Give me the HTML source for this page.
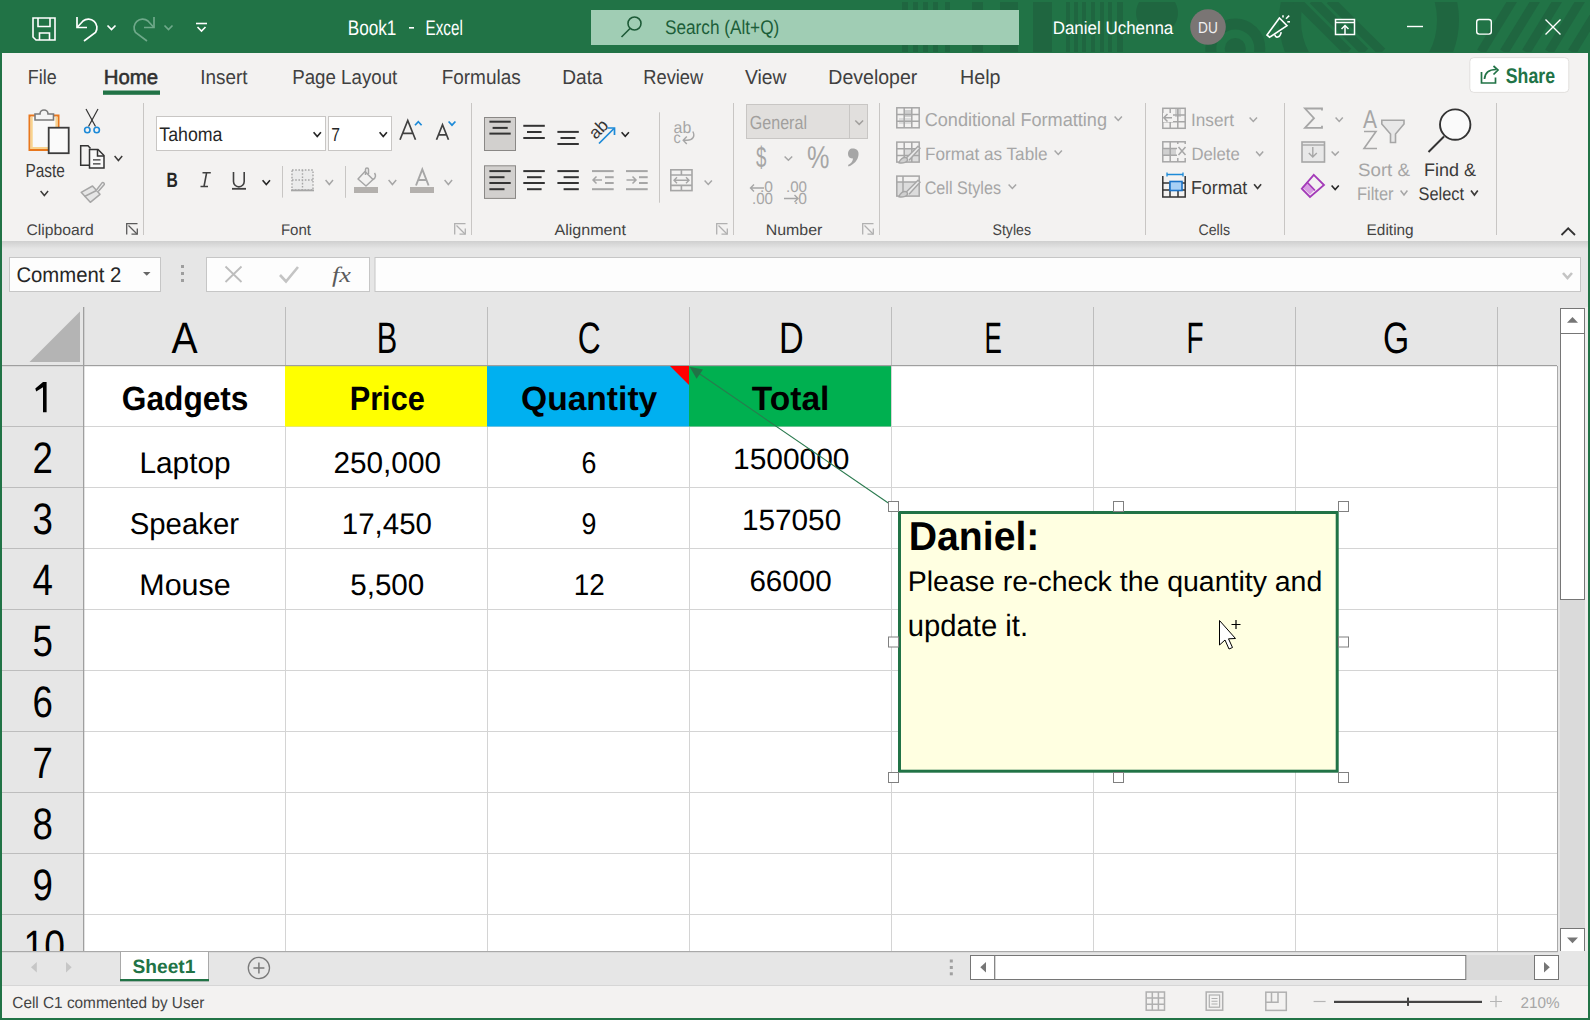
<!DOCTYPE html>
<html><head><meta charset="utf-8"><title>Excel</title>
<style>html,body{margin:0;padding:0;background:#f3f2f1;overflow:hidden}svg{display:block}text{font-family:"Liberation Sans",sans-serif;white-space:pre}</style>
</head><body>
<svg width="1590" height="1020" viewBox="0 0 1590 1020" text-rendering="geometricPrecision">
<rect x="0" y="0" width="1590" height="1020" fill="#f3f2f1"/>
<rect x="0" y="0" width="1590" height="52" fill="#217346"/>
<defs><clipPath id="tb"><rect x="0" y="2" width="1590" height="50"/></clipPath></defs><g clip-path="url(#tb)">
<g fill="#1f6640"><rect x="902" y="0" width="6" height="52"/><rect x="913" y="0" width="5" height="52"/><rect x="923" y="0" width="5" height="52"/><rect x="933" y="0" width="5" height="52"/><rect x="945" y="0" width="5" height="52"/><rect x="972" y="0" width="11" height="52"/><rect x="1000" y="0" width="18" height="52"/><rect x="1033" y="0" width="19" height="52"/><rect x="1066" y="0" width="4" height="52"/><rect x="1074" y="0" width="4" height="52"/><rect x="1082" y="0" width="4" height="52"/><rect x="1091" y="0" width="4" height="52"/><rect x="1100" y="0" width="4" height="52"/><rect x="1108" y="0" width="4" height="52"/><rect x="1117" y="0" width="6" height="52"/><circle cx="1157" cy="13" r="21"/><circle cx="1235.3" cy="48.5" r="10.5"/></g>
<g fill="none" stroke="#1f6640"><circle cx="1235.3" cy="48.5" r="24.5" stroke-width="11"/><circle cx="1369" cy="20" r="79" stroke-width="22"/></g>
<g stroke="#1f6640" stroke-width="9"><line x1="1296" y1="0" x2="1348" y2="52"/><line x1="1313" y1="0" x2="1365" y2="52"/><line x1="1330" y1="0" x2="1382" y2="52"/><line x1="1513" y1="0" x2="1481" y2="52" stroke-width="9"/><line x1="1536" y1="0" x2="1504" y2="52" stroke-width="9"/><line x1="1558" y1="0" x2="1526" y2="52" stroke-width="9"/><line x1="1581" y1="0" x2="1549" y2="52" stroke-width="9"/><line x1="1604" y1="0" x2="1572" y2="52" stroke-width="9"/></g>
</g>
<rect x="0" y="52" width="1590" height="1" fill="#217346"/>
<g fill="none" stroke="#ffffff" stroke-width="1.6"><path d="M33,18 H55 V40 H36 L33,37 Z"/><path d="M38,18 V26.5 H50 V18"/><path d="M39.5,40 V33 H49.5 V40"/></g>
<g fill="none" stroke="#ffffff" stroke-width="1.7" stroke-linejoin="miter"><path d="M77,17 V27.5 H87"/><path d="M77.5,27 L83,21 A8.6,8.6 0 0 1 95.5,32.5 L84,41"/><path d="M107.5,25.5 L111.5,29.5 L115.5,25.5"/></g>
<g fill="none" stroke="#6fa98a" stroke-width="1.7"><path d="M154,17 V27.5 H144"/><path d="M153.5,27 L148,21 A8.6,8.6 0 0 0 135.5,32.5 L147,41"/><path d="M164.5,25.5 L168.5,29.5 L172.5,25.5"/></g>
<g fill="none" stroke="#ffffff" stroke-width="1.6"><path d="M196,23.5 H207"/><path d="M197.5,27 L201.5,31 L205.5,27"/></g>
<text x="347.70" y="34.60" font-size="21.08" font-weight="normal" fill="#ffffff" textLength="48.71" lengthAdjust="spacingAndGlyphs">Book1</text>
<rect x="409" y="27" width="5" height="1.6" fill="#fff"/>
<text x="425.60" y="34.60" font-size="21.08" font-weight="normal" fill="#ffffff" textLength="37.20" lengthAdjust="spacingAndGlyphs">Excel</text>
<rect x="591" y="10" width="428" height="35" fill="#a0cdb4"/>
<g fill="none" stroke="#1d5a37" stroke-width="1.6"><circle cx="634.5" cy="23.5" r="6.5"/><path d="M630,28.5 L621.5,37"/></g>
<text x="665.00" y="34.30" font-size="19.77" font-weight="normal" fill="#1c5e39" textLength="114.30" lengthAdjust="spacingAndGlyphs">Search (Alt+Q)</text>
<text x="1052.70" y="33.50" font-size="18.02" font-weight="normal" fill="#ffffff" textLength="120.58" lengthAdjust="spacingAndGlyphs">Daniel Uchenna</text>
<circle cx="1208" cy="27" r="17.8" fill="#7a7574"/>
<text x="1198.00" y="33.00" font-size="15.99" font-weight="normal" fill="#f0f0f0" textLength="19.80" lengthAdjust="spacingAndGlyphs">DU</text>
<g fill="none" stroke="#ffffff" stroke-width="1.6" stroke-linejoin="miter"><path d="M1267,35 L1279.4,18 L1287,25.6 L1269.6,37.2 Z"/><path d="M1274.8,34.6 C1275.5,38 1280,38.5 1281.2,32.2"/><path d="M1283,15.2 V17.4"/><path d="M1286,18.8 L1289.2,15.6"/><path d="M1287.3,21.8 H1290"/></g>
<g fill="none" stroke="#ffffff" stroke-width="1.5"><rect x="1335.5" y="19.5" width="19" height="15"/><path d="M1335.5,22.5 H1354.5"/><path d="M1345,34 V26"/><path d="M1341.5,29 L1345,25.5 L1348.5,29"/></g>
<g fill="none" stroke="#ffffff" stroke-width="1.4"><path d="M1407,26.5 H1423"/><rect x="1476.7" y="19.5" width="14.6" height="14.6" rx="2.5"/><path d="M1545.5,19.5 L1560.5,34.5 M1560.5,19.5 L1545.5,34.5"/></g>
<rect x="0" y="52" width="2" height="968" fill="#217346"/><rect x="1588" y="52" width="2" height="968" fill="#217346"/>
<text x="27.80" y="84.00" font-size="20.35" font-weight="normal" fill="#404040" textLength="28.81" lengthAdjust="spacingAndGlyphs">File</text>
<text x="200.30" y="84.00" font-size="20.35" font-weight="normal" fill="#404040" textLength="47.20" lengthAdjust="spacingAndGlyphs">Insert</text>
<text x="292.20" y="84.00" font-size="20.35" font-weight="normal" fill="#404040" textLength="105.10" lengthAdjust="spacingAndGlyphs">Page Layout</text>
<text x="441.70" y="84.00" font-size="20.35" font-weight="normal" fill="#404040" textLength="78.99" lengthAdjust="spacingAndGlyphs">Formulas</text>
<text x="562.30" y="84.00" font-size="20.35" font-weight="normal" fill="#404040" textLength="40.39" lengthAdjust="spacingAndGlyphs">Data</text>
<text x="643.30" y="84.00" font-size="20.35" font-weight="normal" fill="#404040" textLength="59.94" lengthAdjust="spacingAndGlyphs">Review</text>
<text x="745.00" y="84.00" font-size="20.35" font-weight="normal" fill="#404040" textLength="41.45" lengthAdjust="spacingAndGlyphs">View</text>
<text x="828.30" y="84.00" font-size="20.35" font-weight="normal" fill="#404040" textLength="89.00" lengthAdjust="spacingAndGlyphs">Developer</text>
<text x="960.00" y="84.00" font-size="20.35" font-weight="normal" fill="#404040" textLength="40.49" lengthAdjust="spacingAndGlyphs">Help</text>
<text x="103.80" y="84.00" font-size="20.35" font-weight="normal" fill="#303030" textLength="54.39" lengthAdjust="spacingAndGlyphs" stroke="#303030" stroke-width="0.55">Home</text>
<rect x="103" y="90.5" width="57" height="4.3" fill="#217346"/>
<rect x="1469.8" y="57.6" width="99" height="34.8" rx="4" fill="#ffffff" stroke="#e1dfdd" stroke-width="1"/>
<g fill="none" stroke="#217346" stroke-width="1.7"><path d="M1481.5,72 V83 H1495.5 V77.5"/><path d="M1484.5,79 C1485,72 1490,69.5 1496,69.5"/><path d="M1493.5,66 L1498,70 L1493.5,74.5"/></g>
<text x="1505.80" y="83.00" font-size="21.22" font-weight="bold" fill="#217346" textLength="49.21" lengthAdjust="spacingAndGlyphs">Share</text>
<rect x="143.0" y="103" width="1" height="132" fill="#c8c6c4"/>
<rect x="471.0" y="103" width="1" height="132" fill="#c8c6c4"/>
<rect x="733.0" y="103" width="1" height="132" fill="#c8c6c4"/>
<rect x="879.0" y="103" width="1" height="132" fill="#c8c6c4"/>
<rect x="1145.0" y="103" width="1" height="132" fill="#c8c6c4"/>
<rect x="1284.0" y="103" width="1" height="132" fill="#c8c6c4"/>
<rect x="1496.0" y="103" width="1" height="132" fill="#c8c6c4"/>
<text x="26.50" y="234.80" font-size="15.41" font-weight="normal" fill="#444444" textLength="67.20" lengthAdjust="spacingAndGlyphs">Clipboard</text>
<text x="280.90" y="234.80" font-size="15.41" font-weight="normal" fill="#444444" textLength="30.10" lengthAdjust="spacingAndGlyphs">Font</text>
<text x="554.40" y="234.80" font-size="15.41" font-weight="normal" fill="#444444" textLength="71.60" lengthAdjust="spacingAndGlyphs">Alignment</text>
<text x="765.70" y="234.80" font-size="15.41" font-weight="normal" fill="#444444" textLength="56.69" lengthAdjust="spacingAndGlyphs">Number</text>
<text x="992.50" y="234.80" font-size="15.41" font-weight="normal" fill="#444444" textLength="38.50" lengthAdjust="spacingAndGlyphs">Styles</text>
<text x="1198.50" y="234.80" font-size="15.41" font-weight="normal" fill="#444444" textLength="31.50" lengthAdjust="spacingAndGlyphs">Cells</text>
<text x="1366.60" y="234.80" font-size="15.41" font-weight="normal" fill="#444444" textLength="47.09" lengthAdjust="spacingAndGlyphs">Editing</text>
<g fill="none" stroke="#5a5a5a" stroke-width="1.3"><path d="M126.7,234.5 V223.7 H137.5"/><path d="M128.5,225.5 L137,234"/><path d="M131.5,234.2 H137.3 V228.5"/></g>
<g fill="none" stroke="#b0b0b0" stroke-width="1.3"><path d="M454.7,234.5 V223.7 H465.5"/><path d="M456.5,225.5 L465,234"/><path d="M459.5,234.2 H465.3 V228.5"/></g>
<g fill="none" stroke="#b0b0b0" stroke-width="1.3"><path d="M716.7,234.5 V223.7 H727.5"/><path d="M718.5,225.5 L727,234"/><path d="M721.5,234.2 H727.3 V228.5"/></g>
<g fill="none" stroke="#b0b0b0" stroke-width="1.3"><path d="M862.7,234.5 V223.7 H873.5"/><path d="M864.5,225.5 L873,234"/><path d="M867.5,234.2 H873.3 V228.5"/></g>
<rect x="29.5" y="115.5" width="29" height="34.5" fill="#f9f9f9" stroke="#e8771d" stroke-width="2"/>
<path d="M31.6,117 V148 H48 M56.5,117 V127" fill="none" stroke="#f8d38e" stroke-width="2.2"/>
<path d="M35,120 V114 H40 A4,4 0 0 1 48,114 H53.5 V120 Z" fill="#f4f4f4" stroke="#7a7a7a" stroke-width="1.6"/>
<rect x="48.7" y="127.7" width="20" height="25.5" fill="#fafafa" stroke="#3c3c3c" stroke-width="1.8"/>
<text x="25.40" y="176.90" font-size="19.04" font-weight="normal" fill="#3b3a39" textLength="39.50" lengthAdjust="spacingAndGlyphs">Paste</text>
<path d="M40.6,191.1 L44.35,195.5 L48.1,191.1" fill="none" stroke="#3b3a39" stroke-width="1.5"/>
<g fill="none" stroke="#333" stroke-width="1.2"><path d="M86,109 L95.5,126.5"/><path d="M98,109 L88.5,126.5"/></g>
<g fill="none" stroke="#1c8ad8" stroke-width="1.6"><circle cx="87.3" cy="130" r="2.7"/><circle cx="96.7" cy="130" r="2.7"/></g>
<g fill="none" stroke="#333" stroke-width="1.5"><path d="M89,165.3 H80.7 V145.8 H88 L90.5,148.5"/><path d="M89.5,149.5 H98 L104,155.5 V168 H89.5 Z" fill="#f8f8f8"/><path d="M97.5,149.5 V156 H104"/><path d="M93,159.8 H100.5 M93,163.8 H100.5" stroke-width="1.2"/></g>
<path d="M114.6,156.1 L118.4,160.5 L122.2,156.1" fill="none" stroke="#3b3a39" stroke-width="1.5"/>
<g stroke="#a6a6a6" stroke-width="1.5" fill="#e6e6e6" stroke-linejoin="round"><path d="M81.2,192.3 L92.5,186 L100,194.3 L90.3,202.3 Z"/><path d="M84.5,196.5 L96.5,190.5" fill="none"/><path d="M96.5,190 L102.2,182.6 A1.6,1.6 0 0 1 104.3,184.6 L98.2,191.5" fill="#eeeeee"/></g>
<rect x="156.5" y="116.5" width="169" height="34" fill="#fff" stroke="#c8c6c4"/>
<rect x="328.5" y="116.5" width="63" height="34" fill="#fff" stroke="#c8c6c4"/>
<text x="159.30" y="141.00" font-size="19.62" font-weight="normal" fill="#262626" textLength="63.09" lengthAdjust="spacingAndGlyphs">Tahoma</text>
<text x="331.30" y="141.00" font-size="18.90" font-weight="normal" fill="#262626" textLength="8.70" lengthAdjust="spacingAndGlyphs">7</text>
<path d="M313.6,132.3 L317.25,136.5 L320.9,132.3" fill="none" stroke="#262626" stroke-width="1.7"/>
<path d="M379.6,132.3 L383.25,136.5 L386.9,132.3" fill="none" stroke="#262626" stroke-width="1.7"/>
<g fill="none" stroke="#404040" stroke-width="1.7"><path d="M400,139.8 L407.75,120.5 L415.5,139.8 M402.6,133.3 H413"/><path d="M436.5,139.8 L442.5,124.8 L448.5,139.8 M438.5,134.8 H446.5"/></g>
<g fill="none" stroke="#1c8ad8" stroke-width="1.7"><path d="M415,125.3 L418.3,121.7 L421.6,125.3"/><path d="M448.6,121.5 L452,125.2 L455.4,121.5"/></g>
<text x="166.60" y="186.80" font-size="20.78" font-weight="bold" fill="#262626" textLength="11.30" lengthAdjust="spacingAndGlyphs">B</text>
<g fill="none" stroke="#404040" stroke-width="1.6"><path d="M206.6,172.8 L204,186.5 M202.5,172.8 H210.8 M200.5,186.5 H208"/><path d="M233.5,172 V181.5 A5.3,5.3 0 0 0 244.2,181.5 V172" /><path d="M232,188.8 H246" stroke-width="1.8"/></g>
<path d="M262.6,180.3 L266.3,184.5 L270.0,180.3" fill="none" stroke="#262626" stroke-width="1.6"/>
<rect x="282" y="166" width="1" height="31.6" fill="#c8c6c4"/><rect x="345" y="166" width="1" height="31.8" fill="#c8c6c4"/>
<rect x="292" y="170" width="21" height="20" fill="#ebebeb"/>
<g fill="none" stroke="#a6a6a6" stroke-width="1.4" stroke-dasharray="1.6,1.6"><rect x="292" y="170" width="21" height="20"/><path d="M302.5,170 V190 M292,180 H313"/></g>
<rect x="291" y="189.5" width="23" height="1.8" fill="#a6a6a6"/>
<path d="M325.6,180.1 L329.3,184.5 L333.0,180.1" fill="none" stroke="#a6a6a6" stroke-width="1.5"/>
<g fill="none" stroke="#a6a6a6" stroke-width="1.5" stroke-linejoin="round"><path d="M358,179 L365,171.5 L373,179.5 L366,186 Z"/><path d="M365.5,175 V169.5 A1.5,1.5 0 0 1 368.5,169.5 V174"/><path d="M373,179.5 C376,178 376,175 374.5,173"/></g>
<rect x="354" y="187" width="24" height="6" fill="#b3b0ad"/>
<path d="M388.6,180.1 L392.4,184.5 L396.2,180.1" fill="none" stroke="#a6a6a6" stroke-width="1.5"/>
<path d="M416,185.5 L422.3,169.3 L428.6,185.5 M418.2,180 H426.4" fill="none" stroke="#a6a6a6" stroke-width="1.9"/>
<rect x="410" y="187" width="24" height="6" fill="#b3b0ad"/>
<path d="M444.6,180.1 L448.35,184.5 L452.09999999999997,180.1" fill="none" stroke="#a6a6a6" stroke-width="1.5"/>
<rect x="484.5" y="117.5" width="31" height="33" fill="#d2d0ce" stroke="#8a8886"/>
<rect x="484.5" y="165.8" width="31" height="32.6" fill="#d2d0ce" stroke="#8a8886"/>
<rect x="489.4" y="120.7" width="21.30000000000001" height="2" fill="#333"/>
<rect x="492.6" y="126.9" width="15.099999999999966" height="2" fill="#333"/>
<rect x="489.4" y="132.6" width="21.30000000000001" height="2" fill="#333"/>
<rect x="523.3" y="124.8" width="21.5" height="2" fill="#333"/>
<rect x="527" y="131.0" width="14.600000000000023" height="2" fill="#333"/>
<rect x="523.3" y="137.0" width="21.5" height="2" fill="#333"/>
<rect x="557.4" y="130.9" width="21.399999999999977" height="2" fill="#333"/>
<rect x="560.5" y="137.0" width="15.0" height="2" fill="#333"/>
<rect x="557.4" y="143.0" width="21.399999999999977" height="2" fill="#333"/>
<rect x="489.4" y="170.1" width="21.30000000000001" height="2" fill="#333"/>
<rect x="489.4" y="176.2" width="15.100000000000023" height="2" fill="#333"/>
<rect x="489.4" y="182.0" width="21.30000000000001" height="2" fill="#333"/>
<rect x="489.4" y="188.2" width="15.100000000000023" height="2" fill="#333"/>
<rect x="523.3" y="170.1" width="21.5" height="2" fill="#333"/>
<rect x="527" y="176.2" width="14.600000000000023" height="2" fill="#333"/>
<rect x="523.3" y="182.0" width="21.5" height="2" fill="#333"/>
<rect x="527" y="188.2" width="14.600000000000023" height="2" fill="#333"/>
<rect x="557.4" y="170.1" width="21.399999999999977" height="2" fill="#333"/>
<rect x="563.6" y="176.2" width="15.199999999999932" height="2" fill="#333"/>
<rect x="557.4" y="182.0" width="21.399999999999977" height="2" fill="#333"/>
<rect x="563.6" y="188.2" width="15.199999999999932" height="2" fill="#333"/>
<rect x="592" y="170.1" width="21.700000000000045" height="2" fill="#a6a6a6"/>
<rect x="605" y="176.2" width="8.700000000000045" height="2" fill="#a6a6a6"/>
<rect x="605" y="182.0" width="8.700000000000045" height="2" fill="#a6a6a6"/>
<rect x="592" y="188.2" width="21.700000000000045" height="2" fill="#a6a6a6"/>
<rect x="626" y="170.1" width="21.700000000000045" height="2" fill="#a6a6a6"/>
<rect x="639" y="176.2" width="8.700000000000045" height="2" fill="#a6a6a6"/>
<rect x="639" y="182.0" width="8.700000000000045" height="2" fill="#a6a6a6"/>
<rect x="626" y="188.2" width="21.700000000000045" height="2" fill="#a6a6a6"/>
<g fill="none" stroke="#a6a6a6" stroke-width="1.5"><path d="M602,180 H593 M596.5,176.5 L593,180 L596.5,183.5"/><path d="M626.5,180 H636 M632.5,176.5 L636,180 L632.5,183.5"/></g>
<g transform="translate(598.5,128.8) rotate(-45)"><text x="-10" y="6" font-size="17.5" fill="#333">ab</text></g>
<g fill="none" stroke="#1c8ad8" stroke-width="1.7"><path d="M599,143.5 L614,128.5"/><path d="M607.5,128 H614.5 V135"/></g>
<path d="M621.6,132.3 L625.25,136.3 L628.9,132.3" fill="none" stroke="#262626" stroke-width="1.6"/>
<rect x="659" y="112.3" width="1" height="90.4" fill="#c8c6c4"/>
<text x="673.60" y="132.60" font-size="16.42" font-weight="normal" fill="#a6a6a6" textLength="17.70" lengthAdjust="spacingAndGlyphs">ab</text>
<text x="673.60" y="143.20" font-size="15.84" font-weight="normal" fill="#a6a6a6" textLength="7.20" lengthAdjust="spacingAndGlyphs">c</text>
<g fill="none" stroke="#a6a6a6" stroke-width="1.4"><path d="M692.8,131.5 C695.5,136.5 692.5,140.2 687,140.2 H683.5 M686.8,136.5 L683.2,140.2 L686.8,144"/></g>
<g fill="none" stroke="#a6a6a6" stroke-width="1.6"><rect x="670.8" y="169.8" width="21.2" height="20.8"/><path d="M670.8,175 H692 M670.8,185.4 H692 M681.4,169.8 V175 M681.4,185.4 V190.6"/><path d="M674,180.2 H689 M677,177.2 L674,180.2 L677,183.2 M686,177.2 L689,180.2 L686,183.2" stroke-width="1.4"/></g>
<path d="M704.6,180.5 L708.25,184.5 L711.9,180.5" fill="none" stroke="#a6a6a6" stroke-width="1.5"/>
<rect x="746.5" y="104.5" width="121" height="34" fill="#e1dfdd" stroke="#c8c6c4"/>
<rect x="849" y="105" width="1" height="33" fill="#c8c6c4"/>
<text x="749.80" y="129.00" font-size="18.90" font-weight="normal" fill="#a19f9d" textLength="57.19" lengthAdjust="spacingAndGlyphs">General</text>
<path d="M855.3000000000001,120.5 L859.2,124.4 L863.1,120.5" fill="none" stroke="#a19f9d" stroke-width="1.5"/>
<text x="756.00" y="166.50" font-size="29.07" font-weight="normal" fill="#a6a6a6" textLength="10.40" lengthAdjust="spacingAndGlyphs">$</text>
<path d="M784.6,156.5 L788.4,160.2 L792.1999999999999,156.5" fill="none" stroke="#a6a6a6" stroke-width="1.5"/>
<text x="807.00" y="168.00" font-size="31.54" font-weight="normal" fill="#a6a6a6" textLength="22.40" lengthAdjust="spacingAndGlyphs">%</text>
<path d="M852.5,148.5 C857,148.5 859,151 858.5,155 C858,160 854,164.5 848.5,166.5 L848,165 C851,163.5 853,161 853,158.5 C850,158.5 848,157 848,154 C848,150.5 850,148.5 852.5,148.5 Z" fill="#a6a6a6"/>
<text x="760.00" y="192.00" font-size="15.26" font-weight="normal" fill="#a6a6a6" textLength="13.00" lengthAdjust="spacingAndGlyphs">.0</text>
<text x="752.00" y="204.00" font-size="15.99" font-weight="normal" fill="#a6a6a6" textLength="21.00" lengthAdjust="spacingAndGlyphs">.00</text>
<g fill="none" stroke="#a6a6a6" stroke-width="1.4"><path d="M750.5,188 H764 M754,184.5 L750.5,188 L754,191.5"/><path d="M784,198.5 H798 M794.5,195 L798,198.5 L794.5,202"/></g>
<text x="786.00" y="192.00" font-size="15.26" font-weight="normal" fill="#a6a6a6" textLength="21.00" lengthAdjust="spacingAndGlyphs">.00</text>
<text x="794.00" y="204.00" font-size="15.99" font-weight="normal" fill="#a6a6a6" textLength="13.00" lengthAdjust="spacingAndGlyphs">.0</text>
<rect x="904" y="110" width="8" height="7" fill="#cfcfcf"/><rect x="899" y="118" width="13" height="6" fill="#dcdcdc"/>
<g fill="none" stroke="#a6a6a6" stroke-width="1.5"><rect x="896.8" y="107.8" width="22.4" height="20"/><path d="M896.8,114.5 H919.2 M896.8,121.2 H919.2 M904.2,107.8 V127.8 M911.8,107.8 V127.8"/></g>
<rect x="904" y="149" width="15" height="13" fill="#dcdcdc"/>
<g fill="none" stroke="#a6a6a6" stroke-width="1.5"><rect x="896.8" y="142.10000000000002" width="22.4" height="20"/><path d="M896.8,148.8 H919.2 M896.8,155.5 H919.2 M904.2,142.10000000000002 V162.10000000000002 M911.8,142.10000000000002 V162.10000000000002"/></g>
<rect x="897" y="182" width="22" height="14" fill="#dcdcdc"/>
<g fill="none" stroke="#a6a6a6" stroke-width="1.5"><rect x="896.8" y="176.1" width="22.4" height="20"/><path d="M896.8,182 H919.2 M903,176.1 V196.1"/></g>
<g stroke="#a6a6a6" stroke-width="1.4" fill="#e8e8e8"><path d="M906,158.3 L918,146.3 L920,148.3 L909,160.3"/><path d="M899,162.8 C900,159.3 903,156.8 906.5,157.8 C908,159.3 908,161.3 905,162.3 C903,163.10000000000002 900.5,163.10000000000002 899,162.8 Z" fill="#d0d0d0"/></g>
<g stroke="#a6a6a6" stroke-width="1.4" fill="#e8e8e8"><path d="M906,192.3 L918,180.3 L920,182.3 L909,194.3"/><path d="M899,196.8 C900,193.3 903,190.8 906.5,191.8 C908,193.3 908,195.3 905,196.3 C903,197.10000000000002 900.5,197.10000000000002 899,196.8 Z" fill="#d0d0d0"/></g>
<text x="924.70" y="126.20" font-size="18.75" font-weight="normal" fill="#a6a6a6" textLength="182.29" lengthAdjust="spacingAndGlyphs">Conditional Formatting</text>
<path d="M1114.6,116.5 L1118.25,120.5 L1121.9,116.5" fill="none" stroke="#a6a6a6" stroke-width="1.5"/>
<text x="925.00" y="159.50" font-size="17.88" font-weight="normal" fill="#a6a6a6" textLength="122.51" lengthAdjust="spacingAndGlyphs">Format as Table</text>
<path d="M1054.6,150.5 L1058.25,154.5 L1061.9,150.5" fill="none" stroke="#a6a6a6" stroke-width="1.5"/>
<text x="924.70" y="193.70" font-size="18.17" font-weight="normal" fill="#a6a6a6" textLength="76.29" lengthAdjust="spacingAndGlyphs">Cell Styles</text>
<path d="M1008.6,184.5 L1012.35,188.5 L1016.1,184.5" fill="none" stroke="#a6a6a6" stroke-width="1.5"/>
<rect x="1175" y="109" width="6" height="8" fill="#d0d0d0"/>
<g fill="none" stroke="#a6a6a6" stroke-width="1.5"><rect x="1162.8" y="108.3" width="22.4" height="20"/><path d="M1162.8,115.0 H1185.2 M1162.8,121.7 H1185.2 M1170.2,108.3 V128.3 M1177.8,108.3 V128.3"/></g>
<rect x="1163" y="113" width="10" height="9" fill="#f3f2f1"/><path d="M1172,117.8 H1164 M1167.5,114 L1163.8,117.8 L1167.5,121.6" fill="none" stroke="#a6a6a6" stroke-width="1.5"/>
<rect x="1164" y="148" width="12" height="7" fill="#d0d0d0"/>
<g fill="none" stroke="#a6a6a6" stroke-width="1.5"><rect x="1162.8" y="141.8" width="22.4" height="20"/><path d="M1162.8,148.5 H1185.2 M1162.8,155.2 H1185.2 M1170.2,141.8 V161.8 M1177.8,141.8 V161.8"/></g>
<rect x="1177" y="144" width="10" height="14" fill="#f3f2f1"/><path d="M1178.5,147 L1185.5,155 M1185.5,147 L1178.5,155" fill="none" stroke="#a6a6a6" stroke-width="1.5"/>
<rect x="1170.5" y="181.5" width="11" height="8.5" fill="#8cbfee"/>
<g fill="none" stroke="#333" stroke-width="1.5"><path d="M1162.8,176 V197 H1185.2 V176 M1162.8,183 H1185.2 M1162.8,190 H1185.2 M1170,183 V197 M1178,183 V197"/></g>
<rect x="1170" y="181.5" width="12" height="9" fill="#a8d0f5" stroke="#1c74c8" stroke-width="1.6"/>
<path d="M1167,174.5 H1183 M1167,172.5 V176.5 M1183,172.5 V176.5" fill="none" stroke="#1c8ad8" stroke-width="1.3"/>
<text x="1191.00" y="125.80" font-size="17.88" font-weight="normal" fill="#a6a6a6" textLength="43.00" lengthAdjust="spacingAndGlyphs">Insert</text>
<path d="M1249.6,117.5 L1253.3,121.5 L1257.0,117.5" fill="none" stroke="#a6a6a6" stroke-width="1.5"/>
<text x="1191.40" y="159.80" font-size="17.88" font-weight="normal" fill="#a6a6a6" textLength="48.29" lengthAdjust="spacingAndGlyphs">Delete</text>
<path d="M1256.1,151.5 L1259.65,155.5 L1263.2,151.5" fill="none" stroke="#a6a6a6" stroke-width="1.5"/>
<text x="1191.00" y="194.00" font-size="18.90" font-weight="normal" fill="#3b3a39" textLength="56.30" lengthAdjust="spacingAndGlyphs">Format</text>
<path d="M1254.1,184.2 L1257.6,188.5 L1261.1000000000001,184.2" fill="none" stroke="#3b3a39" stroke-width="1.7"/>
<path d="M1322,110.5 V108.5 H1305 L1314,118.2 L1305,127.8 H1322 V125.8" fill="none" stroke="#a6a6a6" stroke-width="1.8"/>
<path d="M1335.6,117.5 L1339.2,121.5 L1342.8000000000002,117.5" fill="none" stroke="#a6a6a6" stroke-width="1.5"/>
<rect x="1302" y="142" width="22.5" height="20" fill="#e8e8e8" stroke="#a6a6a6" stroke-width="1.6"/><path d="M1302,145 H1324.5" stroke="#a6a6a6" stroke-width="1.4"/>
<path d="M1312.8,147 V157 M1308.8,153 L1312.8,157 L1316.8,153" fill="none" stroke="#a6a6a6" stroke-width="1.4"/>
<path d="M1331.6,151.5 L1335.2,155.1 L1338.8000000000002,151.5" fill="none" stroke="#a6a6a6" stroke-width="1.5"/>
<path d="M1302,187 L1310,194.5 L1315,189.5 L1307,182 Z" fill="#d89ce3"/><path d="M1313.8,174.8 L1324,185 L1310,197 L1301.8,188.6 Z" fill="none" stroke="#a33ab8" stroke-width="1.8" stroke-linejoin="miter"/><path d="M1307,182 L1315,190.5" stroke="#a33ab8" stroke-width="1.6"/>
<path d="M1331.6,185.5 L1335.2,189.5 L1338.8000000000002,185.5" fill="none" stroke="#262626" stroke-width="1.6"/>
<text x="1363.00" y="128.30" font-size="25.87" font-weight="normal" fill="#a6a6a6" textLength="14.00" lengthAdjust="spacingAndGlyphs">A</text>
<path d="M1364,131.5 H1376 L1364,148.5 H1377" fill="none" stroke="#a6a6a6" stroke-width="1.6"/>
<path d="M1381.8,120.2 H1404 V124 L1395.5,134 V142.5 H1390.5 V134 L1381.8,124 Z" fill="#e8e8e8" stroke="#a6a6a6" stroke-width="1.6"/>
<text x="1358.00" y="175.80" font-size="18.02" font-weight="normal" fill="#a6a6a6" textLength="52.00" lengthAdjust="spacingAndGlyphs">Sort &amp;</text>
<text x="1357.00" y="199.60" font-size="18.31" font-weight="normal" fill="#a6a6a6" textLength="36.60" lengthAdjust="spacingAndGlyphs">Filter</text>
<path d="M1400.6,190.5 L1404.0,195.0 L1407.4,190.5" fill="none" stroke="#a6a6a6" stroke-width="1.5"/>
<circle cx="1455.2" cy="124.6" r="15.2" fill="#fafafa" stroke="#333" stroke-width="1.9"/><path d="M1428.5,152 L1444,136.5" stroke="#333" stroke-width="1.9"/>
<text x="1424.00" y="175.80" font-size="18.02" font-weight="normal" fill="#3b3a39" textLength="52.00" lengthAdjust="spacingAndGlyphs">Find &amp;</text>
<text x="1418.50" y="199.60" font-size="18.31" font-weight="normal" fill="#3b3a39" textLength="45.51" lengthAdjust="spacingAndGlyphs">Select</text>
<path d="M1471.0,190.5 L1474.4,195.0 L1477.8000000000002,190.5" fill="none" stroke="#3b3a39" stroke-width="1.7"/>
<path d="M1561.5,235 L1568.2,228.3 L1575,235" fill="none" stroke="#333" stroke-width="1.8"/>
<defs><linearGradient id="sh" x1="0" y1="0" x2="0" y2="1"><stop offset="0" stop-color="#cfcfcf"/><stop offset="1" stop-color="#e6e6e6"/></linearGradient></defs>
<rect x="2" y="241" width="1586" height="710" fill="#e6e6e6"/>
<rect x="2" y="241" width="1586" height="8" fill="url(#sh)"/>
<rect x="9.5" y="257.5" width="151" height="34" fill="#fdfdfd" stroke="#c6c6c6"/>
<text x="16.40" y="282.30" font-size="21.22" font-weight="normal" fill="#262626" textLength="104.91" lengthAdjust="spacingAndGlyphs">Comment 2</text>
<path d="M143,272 H150.5 L146.75,275.8 Z" fill="#666"/>
<g fill="#9e9e9e"><rect x="181" y="265" width="3" height="3"/><rect x="181" y="272" width="3" height="3"/><rect x="181" y="279" width="3" height="3"/></g>
<rect x="206.5" y="257.5" width="163" height="34" fill="#fdfdfd" stroke="#c6c6c6"/>
<path d="M225.5,266.5 L241.5,282 M241.5,266.5 L225.5,282" stroke="#bdbdbd" stroke-width="1.8"/>
<path d="M280,275 L286,281.5 L298,267" fill="none" stroke="#c4c4c4" stroke-width="2.6"/>
<text x="332" y="282" style="font-family:'Liberation Serif';font-style:italic" font-size="22" fill="#5a5a5a" textLength="19" lengthAdjust="spacingAndGlyphs">fx</text>
<rect x="375" y="257.5" width="1205.5" height="34" fill="#fdfdfd" stroke="#c6c6c6"/>
<path d="M1563,273 L1567.5,278 L1572,273" fill="none" stroke="#c4c4c4" stroke-width="2.6"/>
<rect x="84" y="366" width="1473" height="585" fill="#ffffff"/>
<rect x="84" y="426" width="1473" height="1" fill="#d4d4d4"/>
<rect x="84" y="487" width="1473" height="1" fill="#d4d4d4"/>
<rect x="84" y="548" width="1473" height="1" fill="#d4d4d4"/>
<rect x="84" y="609" width="1473" height="1" fill="#d4d4d4"/>
<rect x="84" y="670" width="1473" height="1" fill="#d4d4d4"/>
<rect x="84" y="731" width="1473" height="1" fill="#d4d4d4"/>
<rect x="84" y="792" width="1473" height="1" fill="#d4d4d4"/>
<rect x="84" y="853" width="1473" height="1" fill="#d4d4d4"/>
<rect x="84" y="914" width="1473" height="1" fill="#d4d4d4"/>
<rect x="285" y="366" width="1" height="585" fill="#d4d4d4"/>
<rect x="487" y="366" width="1" height="585" fill="#d4d4d4"/>
<rect x="689" y="366" width="1" height="585" fill="#d4d4d4"/>
<rect x="891" y="366" width="1" height="585" fill="#d4d4d4"/>
<rect x="1093" y="366" width="1" height="585" fill="#d4d4d4"/>
<rect x="1295" y="366" width="1" height="585" fill="#d4d4d4"/>
<rect x="1497" y="366" width="1" height="585" fill="#d4d4d4"/>
<rect x="285" y="366" width="202" height="60.5" fill="#ffff00"/>
<rect x="487" y="366" width="202" height="60.5" fill="#00b0f0"/>
<rect x="689" y="366" width="202" height="60.5" fill="#00b050"/>
<rect x="2" y="307" width="1555" height="58" fill="#e6e6e6"/>
<rect x="2" y="366" width="82" height="585" fill="#e6e6e6"/>
<rect x="285" y="307" width="1" height="58" fill="#bdbdbd"/>
<rect x="487" y="307" width="1" height="58" fill="#bdbdbd"/>
<rect x="689" y="307" width="1" height="58" fill="#bdbdbd"/>
<rect x="891" y="307" width="1" height="58" fill="#bdbdbd"/>
<rect x="1093" y="307" width="1" height="58" fill="#bdbdbd"/>
<rect x="1295" y="307" width="1" height="58" fill="#bdbdbd"/>
<rect x="1497" y="307" width="1" height="58" fill="#bdbdbd"/>
<rect x="2" y="426" width="82" height="1" fill="#bdbdbd"/>
<rect x="2" y="487" width="82" height="1" fill="#bdbdbd"/>
<rect x="2" y="548" width="82" height="1" fill="#bdbdbd"/>
<rect x="2" y="609" width="82" height="1" fill="#bdbdbd"/>
<rect x="2" y="670" width="82" height="1" fill="#bdbdbd"/>
<rect x="2" y="731" width="82" height="1" fill="#bdbdbd"/>
<rect x="2" y="792" width="82" height="1" fill="#bdbdbd"/>
<rect x="2" y="853" width="82" height="1" fill="#bdbdbd"/>
<rect x="2" y="914" width="82" height="1" fill="#bdbdbd"/>
<rect x="2" y="365" width="1555" height="1.2" fill="#9f9f9f"/>
<rect x="83" y="307" width="1.3" height="644" fill="#9f9f9f"/>
<path d="M29.5,362 L80,311.5 V362 Z" fill="#b4b4b4"/>
<rect x="1557" y="366" width="1" height="585" fill="#a9a9a9"/>
<text x="171.40" y="352.80" font-size="43.90" font-weight="normal" fill="#000" textLength="26.10" lengthAdjust="spacingAndGlyphs">A</text>
<text x="376.70" y="352.80" font-size="43.90" font-weight="normal" fill="#000" textLength="20.50" lengthAdjust="spacingAndGlyphs">B</text>
<text x="577.70" y="352.80" font-size="43.90" font-weight="normal" fill="#000" textLength="22.91" lengthAdjust="spacingAndGlyphs">C</text>
<text x="779.00" y="352.80" font-size="43.90" font-weight="normal" fill="#000" textLength="24.71" lengthAdjust="spacingAndGlyphs">D</text>
<text x="984.60" y="352.80" font-size="43.90" font-weight="normal" fill="#000" textLength="17.40" lengthAdjust="spacingAndGlyphs">E</text>
<text x="1186.50" y="352.80" font-size="43.90" font-weight="normal" fill="#000" textLength="17.10" lengthAdjust="spacingAndGlyphs">F</text>
<text x="1383.00" y="352.80" font-size="43.90" font-weight="normal" fill="#000" textLength="26.19" lengthAdjust="spacingAndGlyphs">G</text>
<path d="M43,382 H46.6 V412.3 H43 V387.3 L36.2,391.6 L35.3,388.6 Z" fill="#000"/>
<text x="32.40" y="472.80" font-size="44.04" font-weight="normal" fill="#000" textLength="20.41" lengthAdjust="spacingAndGlyphs">2</text>
<text x="32.40" y="533.80" font-size="44.04" font-weight="normal" fill="#000" textLength="20.41" lengthAdjust="spacingAndGlyphs">3</text>
<text x="32.40" y="594.80" font-size="44.04" font-weight="normal" fill="#000" textLength="20.41" lengthAdjust="spacingAndGlyphs">4</text>
<text x="32.40" y="655.80" font-size="44.04" font-weight="normal" fill="#000" textLength="20.41" lengthAdjust="spacingAndGlyphs">5</text>
<text x="32.40" y="716.80" font-size="44.04" font-weight="normal" fill="#000" textLength="20.41" lengthAdjust="spacingAndGlyphs">6</text>
<text x="32.40" y="777.80" font-size="44.04" font-weight="normal" fill="#000" textLength="20.41" lengthAdjust="spacingAndGlyphs">7</text>
<text x="32.40" y="838.80" font-size="44.04" font-weight="normal" fill="#000" textLength="20.41" lengthAdjust="spacingAndGlyphs">8</text>
<text x="32.40" y="899.80" font-size="44.04" font-weight="normal" fill="#000" textLength="20.41" lengthAdjust="spacingAndGlyphs">9</text>
<text x="23.60" y="960.80" font-size="44.04" font-weight="normal" fill="#000" textLength="41.41" lengthAdjust="spacingAndGlyphs">10</text>
<text x="121.80" y="409.60" font-size="33.72" font-weight="bold" fill="#000" textLength="126.70" lengthAdjust="spacingAndGlyphs">Gadgets</text>
<text x="349.70" y="409.60" font-size="33.72" font-weight="bold" fill="#000" textLength="75.11" lengthAdjust="spacingAndGlyphs">Price</text>
<text x="521.00" y="409.60" font-size="33.72" font-weight="bold" fill="#000" textLength="136.29" lengthAdjust="spacingAndGlyphs">Quantity</text>
<text x="751.80" y="409.60" font-size="33.72" font-weight="bold" fill="#000" textLength="77.62" lengthAdjust="spacingAndGlyphs">Total</text>
<text x="139.40" y="473.20" font-size="29.94" font-weight="normal" fill="#000" textLength="91.19" lengthAdjust="spacingAndGlyphs">Laptop</text>
<text x="333.50" y="473.20" font-size="29.94" font-weight="normal" fill="#000" textLength="107.49" lengthAdjust="spacingAndGlyphs">250,000</text>
<text x="581.50" y="473.20" font-size="29.94" font-weight="normal" fill="#000" textLength="14.90" lengthAdjust="spacingAndGlyphs">6</text>
<text x="733.00" y="469.00" font-size="29.36" font-weight="normal" fill="#000" textLength="116.40" lengthAdjust="spacingAndGlyphs">1500000</text>
<text x="129.70" y="534.20" font-size="29.94" font-weight="normal" fill="#000" textLength="109.39" lengthAdjust="spacingAndGlyphs">Speaker</text>
<text x="341.80" y="534.20" font-size="29.94" font-weight="normal" fill="#000" textLength="90.19" lengthAdjust="spacingAndGlyphs">17,450</text>
<text x="581.50" y="534.20" font-size="29.94" font-weight="normal" fill="#000" textLength="14.90" lengthAdjust="spacingAndGlyphs">9</text>
<text x="741.90" y="530.00" font-size="29.36" font-weight="normal" fill="#000" textLength="99.30" lengthAdjust="spacingAndGlyphs">157050</text>
<text x="139.30" y="595.20" font-size="29.94" font-weight="normal" fill="#000" textLength="91.41" lengthAdjust="spacingAndGlyphs">Mouse</text>
<text x="350.20" y="595.20" font-size="29.94" font-weight="normal" fill="#000" textLength="74.11" lengthAdjust="spacingAndGlyphs">5,500</text>
<text x="573.70" y="595.20" font-size="29.94" font-weight="normal" fill="#000" textLength="31.01" lengthAdjust="spacingAndGlyphs">12</text>
<text x="749.40" y="591.00" font-size="29.36" font-weight="normal" fill="#000" textLength="82.39" lengthAdjust="spacingAndGlyphs">66000</text>
<path d="M670,366 H689 V385 Z" fill="#ff0000"/>
<line x1="694" y1="370" x2="889" y2="503.5" stroke="#2a7a4e" stroke-width="1.1"/>
<path d="M689.6,366.8 L703,369.5 L696.6,378.8 Z" fill="#217346"/>
<rect x="899.5" y="512.5" width="437.7" height="258.7" fill="#ffffe1" stroke="#217346" stroke-width="3"/>
<rect x="888.5" y="501.5" width="10" height="10" fill="#fff" stroke="#808080" stroke-width="1"/>
<rect x="888.5" y="772.5" width="10" height="10" fill="#fff" stroke="#808080" stroke-width="1"/>
<rect x="1113.5" y="501.5" width="10" height="10" fill="#fff" stroke="#808080" stroke-width="1"/>
<rect x="1113.5" y="772.5" width="10" height="10" fill="#fff" stroke="#808080" stroke-width="1"/>
<rect x="1338.5" y="501.5" width="10" height="10" fill="#fff" stroke="#808080" stroke-width="1"/>
<rect x="1338.5" y="772.5" width="10" height="10" fill="#fff" stroke="#808080" stroke-width="1"/>
<rect x="888.5" y="637" width="10" height="10" fill="#fff" stroke="#808080" stroke-width="1"/>
<rect x="1338.5" y="637" width="10" height="10" fill="#fff" stroke="#808080" stroke-width="1"/>
<text x="908.70" y="550.40" font-size="40.41" font-weight="bold" fill="#000" textLength="130.70" lengthAdjust="spacingAndGlyphs">Daniel:</text>
<text x="907.80" y="591.00" font-size="28.34" font-weight="normal" fill="#000" textLength="414.49" lengthAdjust="spacingAndGlyphs">Please re-check the quantity and</text>
<text x="907.80" y="636.40" font-size="30.67" font-weight="normal" fill="#000" textLength="120.21" lengthAdjust="spacingAndGlyphs">update it.</text>
<path d="M1219.5,620.5 V645 L1225,640 L1229,649 L1232.5,647.5 L1228.5,638.8 L1235.5,638.5 Z" fill="#fff" stroke="#000" stroke-width="1" stroke-linejoin="round"/>
<path d="M1236,620 V629 M1231.5,624.5 H1240.5" stroke="#000" stroke-width="1.2"/>
<rect x="1558" y="307" width="30" height="678" fill="#e6e6e6"/>
<rect x="1585" y="307" width="3" height="678" fill="#efeded"/>
<rect x="1560" y="333" width="25" height="595" fill="#dadada"/>
<rect x="1560.5" y="308.5" width="24" height="25" fill="#fff" stroke="#767676"/>
<path d="M1567,322.8 H1578 L1572.5,317 Z" fill="#767676"/>
<rect x="1560.5" y="333.5" width="24" height="266" fill="#fff" stroke="#767676"/>
<rect x="1560.5" y="928.5" width="24" height="24" fill="#fff" stroke="#767676"/>
<path d="M1567,937.5 H1578 L1572.5,943.3 Z" fill="#767676"/>
<rect x="2" y="951" width="1586" height="34" fill="#e6e6e6"/>
<rect x="2" y="951" width="1556" height="1.2" fill="#a9a9a9"/>
<path d="M36.8,962 V972.6 L31,967.3 Z" fill="#c6c6c6"/><path d="M66,962 V972.6 L71.7,967.3 Z" fill="#c6c6c6"/>
<rect x="120.5" y="951.5" width="88" height="29.5" fill="#fff" stroke="#a9a9a9"/>
<rect x="120" y="979" width="89" height="2.2" fill="#217346"/>
<text x="132.50" y="972.60" font-size="19.19" font-weight="bold" fill="#217346" textLength="62.81" lengthAdjust="spacingAndGlyphs">Sheet1</text>
<circle cx="258.9" cy="968" r="10.6" fill="none" stroke="#7a7a7a" stroke-width="1.3"/><path d="M258.9,962.5 V973.5 M253.4,968 H264.4" stroke="#7a7a7a" stroke-width="1.5"/>
<g fill="#a0a0a0"><rect x="949.8" y="959.5" width="3" height="3"/><rect x="949.8" y="966" width="3" height="3"/><rect x="949.8" y="972.3" width="3" height="3"/></g>
<rect x="970" y="955" width="589" height="25" fill="#dadada"/>
<rect x="970.5" y="955.5" width="24.3" height="24" fill="#fff" stroke="#767676"/>
<path d="M986,962 V972.5 L980.3,967.3 Z" fill="#767676"/>
<rect x="994.8" y="955.5" width="471" height="24" fill="#fff" stroke="#767676"/>
<rect x="1534.5" y="955.5" width="24" height="24" fill="#fff" stroke="#767676"/>
<path d="M1544,962 V972.5 L1549.8,967.3 Z" fill="#767676"/>
<rect x="2" y="985" width="1586" height="33" fill="#f3f2f1"/>
<rect x="2" y="985" width="1586" height="1" fill="#d6d6d6"/>
<rect x="0" y="1018" width="1590" height="2" fill="#217346"/>
<text x="12.30" y="1008.00" font-size="15.99" font-weight="normal" fill="#444444" textLength="192.01" lengthAdjust="spacingAndGlyphs">Cell C1 commented by User</text>
<g fill="none" stroke="#b0b0b0" stroke-width="1.5"><rect x="1146.2" y="992" width="18.3" height="18.2"/><path d="M1152.3,992 V1010.2 M1158.4,992 V1010.2 M1146.2,998.1 H1164.5 M1146.2,1004.2 H1164.5"/></g>
<g fill="none" stroke="#b0b0b0" stroke-width="1.5"><rect x="1206.2" y="992" width="16.5" height="18.2"/><rect x="1209.3" y="995" width="10.3" height="12.2" stroke-width="1.2"/><path d="M1211.5,998.5 H1217.5 M1211.5,1001.3 H1217.5 M1211.5,1004 H1217.5" stroke-width="1.1"/></g>
<g fill="none" stroke="#b0b0b0" stroke-width="1.5"><rect x="1265.8" y="992.2" width="20.5" height="18.2"/><path d="M1265.8,1002.3 H1278 V992.2 M1271.5,992.2 V1002.3"/></g>
<path d="M1313.6,1001.5 H1325.6" stroke="#b5b5b5" stroke-width="1.2"/>
<rect x="1334" y="1000.8" width="148" height="2.2" fill="#444"/><rect x="1407" y="997.6" width="2" height="8.3" fill="#444"/>
<path d="M1490,1001.5 H1502 M1496,995.8 V1007.3" stroke="#b5b5b5" stroke-width="1.2"/>
<text x="1520.60" y="1008.00" font-size="15.55" font-weight="normal" fill="#a6a6a6" textLength="39.09" lengthAdjust="spacingAndGlyphs">210%</text>
</svg>
</body></html>
